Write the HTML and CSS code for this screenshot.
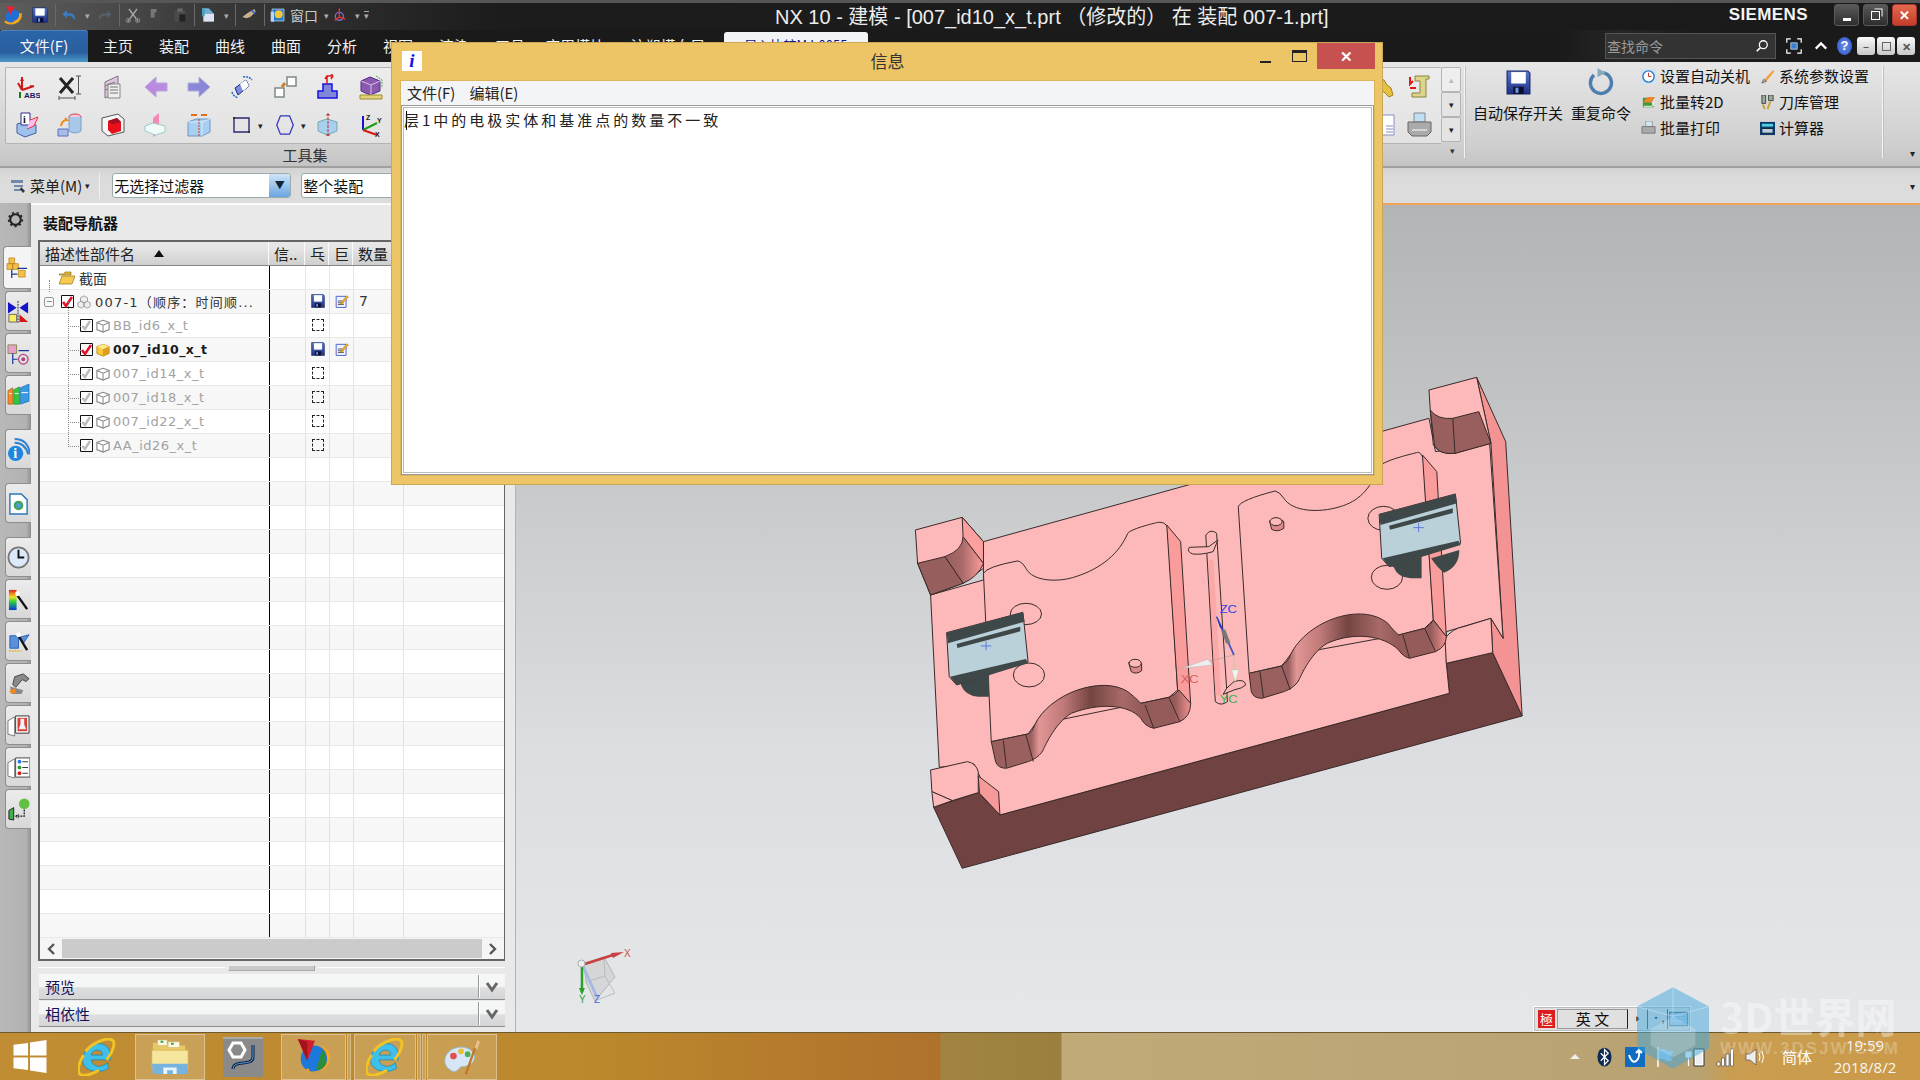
FILE: index.html
```html
<!DOCTYPE html>
<html lang="zh">
<head>
<meta charset="utf-8">
<title>NX 10 - 建模</title>
<link rel="stylesheet" href="styles.css">
</head>
<body>
<svg class="defs" width="0" height="0">
  <defs>
    <linearGradient id="gFloppy" x1="0" y1="0" x2="0" y2="1"><stop offset="0" stop-color="#5a78c8"/><stop offset="1" stop-color="#1c2f86"/></linearGradient>
    <linearGradient id="gWall" gradientUnits="userSpaceOnUse" x1="255" y1="0" x2="715" y2="0">
      <stop offset="0" stop-color="#9a605f"/><stop offset=".2" stop-color="#9a605f"/><stop offset=".24" stop-color="#e09694"/><stop offset=".36" stop-color="#c07a78"/><stop offset=".5" stop-color="#744543"/><stop offset=".66" stop-color="#a86a68"/><stop offset=".75" stop-color="#945b5a"/><stop offset=".92" stop-color="#945b5a"/><stop offset="1" stop-color="#f09090"/>
    </linearGradient>
    <linearGradient id="gWall2" gradientUnits="userSpaceOnUse" x1="850" y1="0" x2="1305" y2="0">
      <stop offset="0" stop-color="#9a605f"/><stop offset=".2" stop-color="#9a605f"/><stop offset=".24" stop-color="#e09694"/><stop offset=".36" stop-color="#c07a78"/><stop offset=".5" stop-color="#744543"/><stop offset=".66" stop-color="#a86a68"/><stop offset=".75" stop-color="#945b5a"/><stop offset=".92" stop-color="#945b5a"/><stop offset="1" stop-color="#f09090"/>
    </linearGradient>
    <linearGradient id="gCorner" x1="0" y1="0" x2="1" y2="0"><stop offset="0" stop-color="#965e5d"/><stop offset=".45" stop-color="#a86a68"/><stop offset="1" stop-color="#ff9d9d"/></linearGradient>
    <symbol id="floppy" viewBox="0 0 24 24"><path d="M1 1h20l2 2v20H1z" fill="url(#gFloppy)" stroke="#1a2466"/><path d="M5 2h14v11H5z" fill="#fff"/><path d="M7 16h10v7H7z" fill="#0b0f2c"/><path d="M9 17h3v5H9z" fill="#6f8fe0"/></symbol>
    <symbol id="note" viewBox="0 0 24 24"><path d="M2 4h17v19H2z" fill="#eef2ff" stroke="#3e56c8" stroke-width="1.5"/><path d="M5 12h8M5 15h10M5 18h10" stroke="#333" stroke-width="1.3"/><path d="M10 15 20 3l3 2-11 12-3 1z" fill="#f0b820" stroke="#a34b12" stroke-width=".7"/></symbol>
    <symbol id="cube" viewBox="0 0 16 16"><path d="M8 1.500 15 4v8l-7 3-7-3V4z" fill="#fff" stroke="#8a8a8a" stroke-width="1.300"/><path d="M1 4l7 3 7-3M8 7v8" fill="none" stroke="#8a8a8a" stroke-width="1.200"/></symbol>
    <symbol id="cubeY" viewBox="0 0 16 16"><path d="M8 1.500 15 4v8l-7 3-7-3V4z" fill="#f8c93c" stroke="#c28c16"/><path d="M1 4l7 3 7-3-7-2.500z" fill="#fce98a"/><path d="M8 7v8l7-3V4z" fill="#e09c1c"/></symbol>
    <symbol id="chkRed" viewBox="0 0 13 13"><path d="M.5.500h12v12H.500z" fill="#fff" stroke="#111"/><path d="M2 7l3 4 6-9" fill="none" stroke="#e3122a" stroke-width="2.600"/></symbol>
    <symbol id="chkGray" viewBox="0 0 13 13"><path d="M.5.500h12v12H.500z" fill="#fff" stroke="#111"/><path d="M2.500 7l2.500 3 5-8" fill="none" stroke="#bcbcbc" stroke-width="2.400"/></symbol>
    <symbol id="ie" viewBox="0 0 40 40"><path d="M5 24C5 11 15 5 24 6c7 1 11 7 10 17H14c1 8 11 9 17 3l1 6c-9 6-27 3-27-8zM14 18h12c0-7-11-7-12 0z" fill="#3fc0ea" stroke="#1785bd" stroke-width=".8"/><path d="M8 14C15 5 30 -1 36 2c4 3 1 12-6 21M6 18C0 27-1 35 2 38c4 3 13 0 20-4" fill="none" stroke="#f1c326" stroke-width="3"/></symbol>
    <g id="electrode">
      <path class="m0" d="M185 965 250 945V1010H225Q195 1008 185 975z" fill="#3f4849"/>
      <path class="m" d="M152 818 328 757 340 905 175 975 158 950z" fill="#bbd1d9"/>
      <path d="M152 818 328 757 332 785 155 850z" fill="#3f4849"/>
      <path d="M175 852 322 800V814L177 864z" fill="#3f4849"/>
      <path d="M160 950 335 897 340 910 175 975z" fill="#3f4849"/>
      <path class="mb" d="M243 844V871M231 858H255"/>
    </g>
  </defs>
</svg>
<div class="app">
  <header class="titlebar">
    <div class="qat">
      <svg class="q-logo" viewBox="0 0 24 24"><circle cx="12" cy="14" r="8" fill="#1f6fd6"/><path d="M13 20c5-1 8-5 7-10" stroke="#f2a51e" stroke-width="3" fill="none"/><path d="M5 2l9 1-5 9z" fill="#e32636"/><path d="M3 19c4 3 10 3 15-1" stroke="#f2a51e" stroke-width="2.500" fill="none"/></svg>
      <svg class="q-ic ml8" viewBox="0 0 24 24"><use href="#floppy"/></svg>
      <i class="q-sep ml7"></i>
      <svg class="q-ic ml5" viewBox="0 0 24 24"><path d="M21 20c1-8-4-12-12-10V5L2 11l7 6v-4c5-1 9 1 12 7z" fill="#3d7bc4"/></svg>
      <span class="q-drop ml6">▾</span>
      <svg class="q-ic ml6" viewBox="0 0 24 24"><path d="M3 20C2 12 7 8 15 10V5l7 6-7 6v-4c-5-1-9 1-12 7z" fill="#55606c"/></svg>
      <i class="q-sep ml6"></i>
      <svg class="q-ic ml5" viewBox="0 0 24 24"><path d="M4 22 18 3M20 22 6 3" stroke="#aaa" stroke-width="2"/><circle cx="5" cy="20" r="3" fill="none" stroke="#777" stroke-width="2"/><circle cx="19" cy="20" r="3" fill="none" stroke="#777" stroke-width="2"/></svg>
      <svg class="q-ic ml7" viewBox="0 0 24 24"><path d="M4 3h9v13H4z" fill="#777"/><path d="M10 8h10v14H10z" fill="#444"/></svg>
      <svg class="q-ic ml8" viewBox="0 0 24 24"><path d="M4 5h16v17H4z" fill="#4a4a4a"/><path d="M8 2h8v5H8z" fill="#666"/><path d="M11 11h9v11h-9z" fill="#222"/></svg>
      <i class="q-sep ml6"></i>
      <svg class="q-ic ml5" viewBox="0 0 24 24"><path d="M3 2h10l8 8H3z" fill="#6fb0d8"/><path d="M5 10h16v12H5z" fill="#dfe2f2"/><path d="M3 2h4v12H3z" fill="#4aa2b8"/></svg>
      <span class="q-drop ml6">▾</span>
      <i class="q-sep ml5"></i>
      <svg class="q-ic ml5" viewBox="0 0 24 24"><path d="M2 15l8-6 10-6 2 4-8 8-6 2z" fill="#c9b28a"/><path d="M16 5l5 5" stroke="#3c64c8" stroke-width="3"/></svg>
      <i class="q-sep ml7"></i>
      <svg class="q-ic ml5" viewBox="0 0 24 24"><path d="M3 3h18v18H3z" fill="#2a78c8" stroke="#cfe2ff"/><circle cx="13" cy="11" r="6" fill="#f3c73a"/><path d="M1 7h5v15H1z" fill="#b9d4f2"/></svg>
      <span class="q-text ml4">窗口</span>
      <span class="q-drop ml4">▾</span>
      <svg class="q-ic ml2" viewBox="0 0 24 24"><circle cx="11" cy="14" r="6" fill="none" stroke="#7c6bd0" stroke-width="2"/><path d="M11 2v14M4 20l7-5 9 3" stroke="#d33" stroke-width="2" fill="none"/></svg>
      <span class="q-drop ml5">▾</span>
      <span class="q-more ml3">▾</span>
    </div>
    <h1 class="title">NX 10 - 建模 - [007_id10_x_t.prt （修改的） 在 装配 007-1.prt]</h1>
    <span class="siemens">SIEMENS</span>
    <div class="winbtns">
      <button class="wb"><i class="w-min"></i></button>
      <button class="wb"><i class="w-res"></i></button>
      <button class="wb wb-close">✕</button>
    </div>
  </header>

  <nav class="tabs">
    <span class="tab tab-file">文件(F)</span>
    <span class="tab">主页</span><span class="tab">装配</span><span class="tab">曲线</span><span class="tab">曲面</span><span class="tab">分析</span><span class="tab">视图</span><span class="tab">渲染</span><span class="tab">工具</span>
    <span class="tab tab-w">应用模块</span><span class="tab tab-w2">注塑模向导</span>
    <span class="tab-light">导入比较MJ-0055</span>
    <div class="search"><span>查找命令</span>
      <svg class="s-ic" viewBox="0 0 16 16"><circle cx="9.500" cy="6.500" r="4.500" fill="none" stroke="#fff" stroke-width="1.500"/><path d="M6 10l-4 4" stroke="#fff" stroke-width="2"/></svg>
    </div>
    <svg class="t-ic t-fit" viewBox="0 0 20 20"><path d="M1 6V1h5M14 1h5v5M19 14v5h-5M6 19H1v-5" fill="none" stroke="#fff" stroke-width="1.500"/><path d="M6 6h8v8H6z" fill="#3a7fd0" stroke="#cde"/></svg>
    <svg class="t-ic t-up" viewBox="0 0 16 16"><path d="M2 11l6-6 6 6" fill="none" stroke="#fff" stroke-width="2.500"/></svg>
    <span class="t-help">?</span>
    <span class="sb">–</span><span class="sb sb-r"><i></i></span><span class="sb">✕</span>
  </nav>

  <section class="ribbon">
    <div class="toolgroup">
      <div class="toolbox">
        <div class="toolgrid">
          <svg class="ti" viewBox="0 0 26 26"><path d="M8 16V3M8 16l12-4M8 16l-4-7" stroke="#d01818" stroke-width="2" fill="none"/><path d="M8 3l-2 4h4zM20 12l-4-1v3z" fill="#d01818"/><path d="M6 18v6" stroke="#1b7a1b" stroke-width="2"/><text x="10" y="24" class="svg-t">ABS</text></svg>
          <svg class="ti" viewBox="0 0 26 26"><path d="M3 4l13 15M16 4 3 19" stroke="#222" stroke-width="3"/><path d="M19 2h5M21.500 2v18M19 20h5M2 24h16M2 22v4M18 22v4" stroke="#555"/></svg>
          <svg class="ti" viewBox="0 0 26 26"><path d="M5 8 18 2v17L5 24z" fill="#d8c8d8" stroke="#8a6a8a"/><path d="M8 10h12v14H8z" fill="#eee" stroke="#888"/><path d="M10 13h8M10 16h8M10 19h8M5 12l10-4M5 16l3-1" stroke="#777"/></svg>
          <svg class="ti" viewBox="0 0 26 26"><path d="M2 13 13 3v6h11v8H13v6z" fill="#b88ae0" stroke="#b9a5d8"/></svg>
          <svg class="ti" viewBox="0 0 26 26"><path d="M24 13 13 3v6H2v8h11v6z" fill="#8a86d8" stroke="#b0aee0"/></svg>
          <svg class="ti" viewBox="0 0 26 26"><path d="M6 14 17 6l3 6-11 9z" fill="#7a8ce0" stroke="#1b2a80"/><path d="M11 10l6-4 3 6-6 5z" fill="#fff"/><path d="M14 3q6-1 9 3M3 18q1 4 6 6" fill="none" stroke="#2a6ad0" stroke-width="1.500" stroke-dasharray="2 1"/></svg>
          <svg class="ti" viewBox="0 0 26 26"><path d="M15 3h9v9h-9zM3 14h9v9H3z" fill="#fff" stroke="#7f8a80" stroke-width="1.500"/><path d="M13 9l-3 4" stroke="#d08030" stroke-width="3"/></svg>
          <svg class="ti" viewBox="0 0 26 26"><path d="M8 10h9v7h5v7H3v-7h5z" fill="#8086d8" stroke="#1414e0" stroke-width="1.500"/><path d="M12 10V2h6M12 2l-2 3M18 2l-2-2M18 2l-2 3" fill="none" stroke="#e01818" stroke-width="1.500"/></svg>
          <svg class="ti" viewBox="0 0 26 26"><path d="M3 7l9-4 10 4v10l-10 4-9-4z" fill="#8a5ab0" stroke="#552a80"/><path d="M3 7l10 4 9-4M13 11v10" fill="none" stroke="#d8c0e8"/><path d="M2 21h22v4H2z" fill="#e4d27a" stroke="#9c8a30"/><path d="M18 2l6 4v7" stroke="#4a4" fill="none" stroke-dasharray="2 1"/></svg>

          <svg class="ti" viewBox="0 0 26 26"><path d="M3 12l11-3 8 4v8l-11 4-8-4z" fill="#9fc0ea" stroke="#4060a8"/><path d="M7 1h9v12H7z" fill="#fff" stroke="#2a2a8a"/><text x="9" y="11" class="svg-i">i</text><path d="M16 8l8-3-4 9-7 3" fill="#fbe" stroke="#e03a3a"/></svg>
          <svg class="ti" viewBox="0 0 26 26"><ellipse cx="18" cy="5" rx="6" ry="3" fill="#f4c8d8" stroke="#d83a5a"/><path d="M12 5v14q6 4 12 0V5" fill="#a8c8ea" stroke="#7aa0c8"/><path d="M1 17h10v7H1z" fill="#a8bcea" stroke="#5a70c0"/><path d="M4 14q1-6 6-6l-2-2" fill="none" stroke="#f08a20" stroke-width="2"/></svg>
          <svg class="ti" viewBox="0 0 26 26"><path d="M2 6l16-4 6 5v13l-16 4-6-5z" fill="#f6f6f6" stroke="#555"/><path d="M8 9l9-3 4 4v9l-9 3-4-4z" fill="#e8101c"/><path d="M8 9l9-3 4 4-9 2z" fill="#a01020"/></svg>
          <svg class="ti" viewBox="0 0 26 26"><path d="M10 6l6-5v20l-6 4z" fill="#f48ab4"/><path d="M2 14l8-3 12 3v6l-10 3-10-4z" fill="#f0fbf8" stroke="#9cc"/></svg>
          <svg class="ti" viewBox="0 0 26 26"><path d="M2 10l8-3h14v13l-8 4H2z" fill="#a8cef0" stroke="#6a98c8"/><path d="M2 10h14v14M16 10l8-3" fill="none" stroke="#d6ebff"/><path d="M13 7v17" stroke="#d04020" stroke-dasharray="2 1"/><path d="M5 3h6M15 3h6" stroke="#e07020" stroke-width="2"/></svg>
          <div class="ti-drop"><svg class="ti-sm" viewBox="0 0 20 20"><path d="M2 3h15v14H2z" fill="none" stroke="#2a2a70" stroke-width="1.400"/><path d="M1 2h2v2H1zM16 16h2v2h-2z" fill="#333"/></svg><span class="dr">▾</span></div>
          <div class="ti-drop"><svg class="ti-sm" viewBox="0 0 20 24"><path d="M5 2h10l4 10-4 10H5L1 12z" fill="none" stroke="#3636c0" stroke-width="1.400"/></svg><span class="dr">▾</span></div>
          <svg class="ti" viewBox="0 0 26 26"><path d="M3 10l9-3 10 3v9l-10 4-9-4z" fill="#a8cef0" stroke="#7aa"/><path d="M13 1v24" stroke="#b03030" stroke-dasharray="3 1"/><path d="M11 3h4M11 23h4" stroke="#b03030"/></svg>
          <svg class="ti" viewBox="0 0 26 26"><path d="M5 18V4" stroke="#1414c8" stroke-width="2"/><path d="M5 18l14-7" stroke="#16a016" stroke-width="2"/><path d="M5 18l14 5" stroke="#d81818" stroke-width="2"/><text x="8" y="8" class="svg-a">Z</text><text x="19" y="11" class="svg-a">Y</text><text x="17" y="25" class="svg-a">X</text></svg>
        </div>
        <div class="toolgrid-r">
          <svg class="ti ti-clip" viewBox="0 0 26 26"><path d="M10 4l5 2 3 5 4 3 2 7-4 2-5-5-6-3z" fill="#e8c040" stroke="#a08020"/></svg>
          <svg class="ti" viewBox="0 0 26 26"><path d="M8 2h14v3h-3v18H5v-4h8V7H8z" fill="#ddd58a" stroke="#8a8440"/><path d="M3 3v7l3-3M3 14h6" stroke="#e01818" stroke-width="2" fill="none"/></svg>
          <svg class="ti ti-clip" viewBox="0 0 26 26"><path d="M8 3h17v20H8z" fill="#fff" stroke="#8a8ac8"/><path d="M17 14h7M17 17h7M17 20h7" stroke="#8a8ac8"/></svg>
          <svg class="ti" viewBox="0 0 26 26"><path d="M7 1h11v9H7z" fill="#bde0f5" stroke="#888"/><path d="M1 10h23v10l-4 4H5l-4-4z" fill="#aaa" stroke="#666"/><path d="M5 18h15" stroke="#fff"/></svg>
        </div>
      </div>
      <div class="group-label">工具集</div>
    </div>
    <div class="scrollcol"><span class="sc">▴</span><span class="sc sc-d">▾</span><span class="sc sc-d">▾</span><span class="sc-corner">▾</span></div>
    <div class="rib-div"></div>
    <div class="bigbtn b1">
      <svg class="big-ic" viewBox="0 0 24 24"><use href="#floppy"/></svg>
      <span>自动保存开关</span>
    </div>
    <div class="bigbtn b2">
      <svg class="big-ic big-r" viewBox="0 0 24 24"><path d="M6 6a9 9 0 1 0 8-2" fill="none" stroke="#4d7fae" stroke-width="3"/><path d="M9 0l7 4-7 4z" fill="#8ab"/></svg>
      <span>重复命令</span>
    </div>
    <ul class="cmdlist">
      <li><svg class="ci" viewBox="0 0 16 16"><path d="M0 0h16v16H0z" fill="#cfe4f4"/><circle cx="8" cy="8" r="6" fill="#fff" stroke="#2f78c0" stroke-width="1.500"/><path d="M8 4v4h3" stroke="#c03020" fill="none"/></svg>设置自动关机</li>
      <li><svg class="ci" viewBox="0 0 16 16"><path d="M2 3h12l-3 5 3 5H2z" fill="#3e9a3a"/><path d="M2 8l5-6h8l-4 6z" fill="#f0852a"/><path d="M3 12h9l2-4" stroke="#fff" fill="none"/></svg>批量转2D</li>
      <li><svg class="ci" viewBox="0 0 16 16"><path d="M5 0h7v6H5z" fill="#cfe8f5" stroke="#999"/><path d="M1 6h14v7H1z" fill="#aaa" stroke="#777"/></svg>批量打印</li>
    </ul>
    <ul class="cmdlist c2">
      <li><svg class="ci" viewBox="0 0 16 16"><path d="M2 15l2-4 3 2z" fill="#bbb" stroke="#666"/><path d="M5 11l9-10 1 2-8 10z" fill="#f0a030"/></svg>系统参数设置</li>
      <li><svg class="ci" viewBox="0 0 16 16"><path d="M2 0h4v9H2zM9 0h5v6H9z" fill="#9a9" stroke="#444"/><path d="M3 10l2 5M11 7l-3 8" stroke="#c8a030" stroke-width="2"/></svg>刀库管理</li>
      <li><svg class="ci" viewBox="0 0 16 16"><path d="M0 1h16v14H0z" fill="#0c3a6a"/><path d="M2 3h12v3H2z" fill="#4fd0e0"/><path d="M2 8h12v5H2z" fill="#bcd" stroke="#123"/></svg>计算器</li>
    </ul>
    <div class="rib-div d2"></div>
    <span class="rib-arrow">▾</span>
  </section>

  <div class="selbar">
    <svg class="m-ic" viewBox="0 0 16 16"><path d="M1 2h12v3H1zM4 7h9v2H4zM4 11h9v2H4z" fill="#6f8aa8"/><path d="M11 9l4 4-2 2-3-4z" fill="#333"/></svg>
    <span class="m-txt">菜单(M)</span><span class="m-dr">▾</span>
    <i class="m-sep"></i>
    <div class="field f1"><span>无选择过滤器</span><b class="f-btn">▼</b></div>
    <div class="field f2"><span>整个装配</span></div>
    <span class="sel-arrow">▾</span>
  </div>

  <main class="main">
    <aside class="rail">
      <svg class="gear" viewBox="0 0 16 16"><circle cx="8" cy="8" r="5" fill="none" stroke="#222" stroke-width="2"/><circle cx="8" cy="8" r="6.500" fill="none" stroke="#222" stroke-width="1.500" stroke-dasharray="2 2.500"/></svg>
      <div class="rtab active"><svg viewBox="0 0 24 24"><path d="M3 2h6v6H3zM7 8h6v6H7zM1 8h6v6H1z" fill="#f2bf4a" stroke="#b87f14" stroke-width=".7"/><path d="M6 14v9M6 19h6M12 13h10" stroke="#173a9a" stroke-width="1.300" fill="none"/><path d="M13 15h7v7h-7z" fill="#f2bf4a" stroke="#b87f14" stroke-width=".7"/></svg></div>
      <div class="rtab"><svg viewBox="0 0 24 24"><path d="M1 2l9 6-9 6zM22 2l-9 6 9 6z" fill="#1414c8"/><path d="M11.500 1v23" stroke="#222" stroke-dasharray="2 1"/><path d="M2 15h8v8H2z" fill="#f8ee60" stroke="#666"/><path d="M13 15l9 8h-9z" fill="#d81414"/></svg></div>
      <div class="rtab"><svg viewBox="0 0 24 24"><path d="M1 3h9v9H1z" fill="#e8a0c8" stroke="#885"/><path d="M6 12v11M6 18h5M12 9h11" stroke="#173a9a" stroke-width="1.300"/><circle cx="17" cy="18" r="5" fill="none" stroke="#b04080" stroke-width="1.300"/><circle cx="17" cy="18" r="2" fill="#b04080"/></svg></div>
      <div class="rtab"><svg viewBox="0 0 24 24"><path d="M1 7l5-3v17H1z" fill="#f08a2a" stroke="#a85a10" stroke-width=".7"/><path d="M7 6l6-3v18H7z" fill="#34c440" stroke="#1a8a20" stroke-width=".7"/><path d="M14 4l9-4v18l-9 3z" fill="#3a9ae0" stroke="#1a6ab0" stroke-width=".7"/><path d="M2 10h3M8 10h4M15 9h7" stroke="#fff"/></svg></div>
      <div class="rtab gap1"><svg viewBox="0 0 24 24"><circle cx="9" cy="16" r="8" fill="#1f86e0"/><text x="6.500" y="21" class="svg-wi">i</text><path d="M8 5q11 0 14 12M8 1q14 0 16 16" fill="none" stroke="#2f80d0" stroke-width="2"/></svg></div>
      <div class="rtab gap2"><svg viewBox="0 0 24 24"><path d="M3 2h12l6 6v15H3z" fill="#fff" stroke="#2a78b8" stroke-width="1.500"/><circle cx="12" cy="14" r="5" fill="#3da55a"/><circle cx="12" cy="14" r="2.500" fill="#5a9ae0"/></svg></div>
      <div class="rtab gap3"><svg viewBox="0 0 24 24"><circle cx="12" cy="12" r="10.500" fill="#dbe9f8" stroke="#777" stroke-width="1.800"/><path d="M12 4v8h6" fill="none" stroke="#111" stroke-width="2"/></svg></div>
      <div class="rtab"><svg viewBox="0 0 24 24"><defs><linearGradient id="gRain" x1="0" y1="0" x2="0" y2="1"><stop offset="0" stop-color="#e02020"/><stop offset=".35" stop-color="#f0e020"/><stop offset=".6" stop-color="#20d040"/><stop offset="1" stop-color="#1030e0"/></linearGradient></defs><path d="M2 2h8v21H2z" fill="url(#gRain)"/><path d="M11 8l10 14" stroke="#111" stroke-width="2.500"/><circle cx="11" cy="6" r="2.500" fill="#fff"/></svg></div>
      <div class="rtab"><svg viewBox="0 0 24 24"><path d="M3 6h9v13H3zM12 8l11-3-6 9" fill="#5a90d8" stroke="#2a60b8"/><path d="M2 22h13" stroke="#dcb83a" stroke-width="1.500" stroke-dasharray="2 1"/><path d="M12 6l9 15" stroke="#111" stroke-width="2.500"/><circle cx="12" cy="5" r="2.500" fill="#fff"/></svg></div>
      <div class="rtab"><svg viewBox="0 0 24 24"><path d="M8 5l9-3 6 5-3 3-4-2-7 8-3-3z" fill="#8a8a8a" stroke="#444"/><path d="M3 15l14 4-2 4H5z" fill="#888"/><path d="M2 20l6-3 2 4-5 2z" fill="#f08a20"/></svg></div>
      <div class="rtab"><svg viewBox="0 0 24 24"><path d="M9 2h14v18H9z" fill="#fff" stroke="#333"/><path d="M11 4h10v14H11z" fill="#d84030"/><path d="M14 5h4v6l2 5h-8l2-5z" fill="#f0f0ff"/><path d="M1 7l7-4v20l-7 -2z" fill="#fff" stroke="#777"/></svg></div>
      <div class="rtab"><svg viewBox="0 0 24 24"><path d="M9 2h15v20H9z" fill="#fff" stroke="#444"/><circle cx="13" cy="6" r="2" fill="#2a7ae0"/><circle cx="13" cy="12" r="2" fill="#30a030"/><circle cx="13" cy="18" r="2" fill="#d02020"/><path d="M16 6h6M16 12h6M16 18h6" stroke="#333"/><path d="M1 7l7-4v20l-7-2z" fill="#fff" stroke="#777"/></svg></div>
      <div class="rtab"><svg viewBox="0 0 24 24"><circle cx="18" cy="6" r="5.500" fill="#60c040"/><path d="M2 13l5-3v13l-5-1z" fill="#3fb04a" stroke="#222"/><path d="M18 12v7H9M9 19l3-2M9 19l3 2" fill="none" stroke="#111" stroke-width="1.300" stroke-dasharray="2 1"/></svg></div>
    </aside>

    <section class="nav">
      <h2 class="nav-title">装配导航器</h2>
      <div class="tbl">
        <div class="thead">
          <span class="th th-name">描述性部件名<i class="sort"></i></span>
          <span class="th th-a">信..</span><span class="th th-b">乓</span><span class="th th-b">巨</span><span class="th th-c">数量</span><span class="th th-d"></span>
        </div>
        <div class="tbody">
          <div class="row">
            <svg class="folder" viewBox="0 0 16 14"><path d="M0 3h5l1-2h6v3H0z" fill="#dfb63a" stroke="#9a7514" stroke-width=".7"/><path d="M0 13l3-8h13l-3 8z" fill="#f6c950" stroke="#9a7514" stroke-width=".7"/></svg>
            <span class="cell-text t-dark t-cjk">截面</span>
          </div>
          <div class="row root">
            <span class="exp"></span>
            <svg class="chk" viewBox="0 0 13 13"><use href="#chkRed"/></svg>
            <svg class="cube-ic" viewBox="0 0 16 16"><path d="M1 9l4-2 3 2v4l-3 2-4-2zM8 9l4-2 3 2v4l-3 2-4-2zM4 3l4-2 4 2v4l-4 2-4-2z" fill="#eee" stroke="#999"/></svg>
            <span class="cell-text t-dark nm">007-1（顺序：时间顺...</span>
            <svg class="st st-a" viewBox="0 0 24 24"><use href="#floppy"/></svg>
            <svg class="st st-b" viewBox="0 0 24 24"><use href="#note"/></svg>
            <span class="qty">7</span>
          </div>
          <div class="row child"><svg class="chk" viewBox="0 0 13 13"><use href="#chkGray"/></svg><svg class="cube-ic" viewBox="0 0 16 16"><use href="#cube"/></svg><span class="cell-text t-gray">BB_id6_x_t</span><i class="dash"></i></div>
          <div class="row child"><svg class="chk" viewBox="0 0 13 13"><use href="#chkRed"/></svg><svg class="cube-ic" viewBox="0 0 16 16"><use href="#cubeY"/></svg><span class="cell-text t-bold">007_id10_x_t</span><svg class="st st-a" viewBox="0 0 24 24"><use href="#floppy"/></svg><svg class="st st-b" viewBox="0 0 24 24"><use href="#note"/></svg></div>
          <div class="row child"><svg class="chk" viewBox="0 0 13 13"><use href="#chkGray"/></svg><svg class="cube-ic" viewBox="0 0 16 16"><use href="#cube"/></svg><span class="cell-text t-gray">007_id14_x_t</span><i class="dash"></i></div>
          <div class="row child"><svg class="chk" viewBox="0 0 13 13"><use href="#chkGray"/></svg><svg class="cube-ic" viewBox="0 0 16 16"><use href="#cube"/></svg><span class="cell-text t-gray">007_id18_x_t</span><i class="dash"></i></div>
          <div class="row child"><svg class="chk" viewBox="0 0 13 13"><use href="#chkGray"/></svg><svg class="cube-ic" viewBox="0 0 16 16"><use href="#cube"/></svg><span class="cell-text t-gray">007_id22_x_t</span><i class="dash"></i></div>
          <div class="row child last"><svg class="chk" viewBox="0 0 13 13"><use href="#chkGray"/></svg><svg class="cube-ic" viewBox="0 0 16 16"><use href="#cube"/></svg><span class="cell-text t-gray">AA_id26_x_t</span><i class="dash"></i></div>
          <div class="row"></div><div class="row"></div><div class="row"></div><div class="row"></div><div class="row"></div>
          <div class="row"></div><div class="row"></div><div class="row"></div><div class="row"></div><div class="row"></div>
          <div class="row"></div><div class="row"></div><div class="row"></div><div class="row"></div><div class="row"></div>
          <div class="row"></div><div class="row"></div><div class="row"></div><div class="row"></div><div class="row"></div>
        </div>
        <div class="hscroll">
          <svg class="chev" viewBox="0 0 10 14"><path d="M8 2 3 7l5 5" fill="none" stroke="#555" stroke-width="2.400"/></svg>
          <span class="thumb"></span>
          <svg class="chev" viewBox="0 0 10 14"><path d="M2 2l5 5-5 5" fill="none" stroke="#555" stroke-width="2.400"/></svg>
        </div>
      </div>
      <div class="splitter"><i></i><b></b><i></i></div>
      <div class="acc"><span class="acc-t">预览</span><svg class="acc-c" viewBox="0 0 14 12"><path d="M2 2l5 7 5-7" fill="none" stroke="#666" stroke-width="3"/></svg></div>
      <div class="acc a2"><span class="acc-t">相依性</span><svg class="acc-c" viewBox="0 0 14 12"><path d="M2 2l5 7 5-7" fill="none" stroke="#666" stroke-width="3"/></svg></div>
    </section>

    <div class="viewport">
      <svg class="scene" viewBox="515 205 1405 827" preserveAspectRatio="none">
        <g transform="translate(880 360) scale(.4337 .3333)">
          <path class="m" d="M122 1342 225 1298 275 1365 1312 1000 1305 910 1412 878 1480 1068 188 1525z" fill="#704241"/>
          <path class="m" d="M1375 52 1442 245 1480 1068 1412 878 1408 775 1436 835 1408 250z" fill="#f49393"/>
          <path class="m" d="M237 545 1265 175 1280 275 1405 250 1436 835 1408 775 1305 815 1305 910 1312 1000 275 1365 225 1240 215 1212 135 1222 115 705 237 660z" fill="#fdb9b9"/>
          <path class="m" d="M1302 835Q1320 805 1345 800L1408 775 1412 878 1305 910z" fill="#fdb9b9"/>
          <path class="m" d="M1265 90 1375 52 1408 250 1325 280Q1290 285 1275 255L1268 150z" fill="#fdb9b9"/>
          <path class="m" d="M1268 150Q1285 180 1320 175L1380 155 1408 250 1325 280Q1290 285 1278 258z" fill="#985f5e"/>
          <path class="m0 ln" d="M1320 175 1325 280"/>
          <path class="m" d="M80 510 188 472 237 545 237 625 190 670 115 705 85 610z" fill="#fdb9b9"/>
          <path class="m" d="M148 590Q190 570 190 530L237 610Q225 650 190 670z" fill="url(#gCorner)"/>
          <path class="m" d="M85 610 148 590 190 670 115 705z" fill="#965e5d"/>
          <path class="m" d="M188 472 237 545V610L190 530z" fill="#fb9f9f"/>
          <path class="m" d="M115 1230 200 1205Q220 1210 225 1235L225 1298 165 1322 118 1295z" fill="#fdb9b9"/>
          <path class="m" d="M225 1248 272 1295 275 1365 228 1300z" fill="#f59999"/>
          <path class="m" d="M118 1295 165 1322 122 1342z" fill="#fdb9b9"/>

          <path class="m" d="M237 640Q245 620 315 603 325 603 335 625C350 665 410 668 450 650 510 625 550 580 570 520 578 505 640 487 640 487 660 485 662 505 662 505L685 990 665 1012 600 1030 355 1095 340 1122 255 1145z" fill="#fdb9b9"/>
          <path class="m" d="M660 495 692 545 715 1030 685 990z" fill="#fb9c9c"/>
          <path class="m" d="M255 1145 340 1122Q350 1115 355 1095C390 1000 510 945 570 995 590 1015 600 1030 600 1030L665 1012Q680 1005 688 990L715 1030Q715 1070 690 1085L630 1105Q610 1100 600 1075C570 1030 500 1030 440 1060 400 1090 375 1170 375 1170 365 1195 340 1205 340 1205L290 1225Q270 1225 265 1205z" fill="url(#gWall)"/>
          <path class="m0 ln" d="M283 1142 290 1222M335 1125 352 1205M610 1035 630 1105M665 1012 690 1085"/>

          <path class="m" d="M825 440Q830 420 910 393 920 395 930 415C950 455 1010 460 1060 440 1100 425 1130 390 1150 320 1160 300 1240 277 1240 277 1250 280 1252 300 1252 300L1275 780 1255 805 1195 825 945 885 925 918 850 940z" fill="#fdb9b9"/>
          <path class="m" d="M1250 285 1283 335 1305 830 1275 780z" fill="#fb9c9c"/>
          <path class="m" d="M850 940 925 918Q940 905 945 885C985 780 1110 725 1170 790 1185 815 1195 825 1195 825L1255 805Q1270 795 1275 780L1305 830Q1305 860 1280 875L1220 895Q1205 890 1195 870C1160 825 1090 815 1030 850 990 880 965 960 965 960 955 985 930 995 930 995L880 1015Q860 1015 855 995z" fill="url(#gWall2)"/>
          <path class="m0 ln" d="M875 935 883 1012M925 918 945 990M1205 825 1220 895M1255 805 1280 875"/>

          <path class="m" d="M750 525Q762 505 775 520L800 1025Q785 1040 772 1025z" fill="#fdb9b9"/>
          <path class="m" d="M757 560 778 540 767 575Q740 585 720 582 705 575 712 562z" fill="#fdb9b9"/>
          <path class="m" d="M798 985 815 965Q840 955 842 975 835 985 815 990L790 1003z" fill="#fdb9b9"/>
          <path d="M756 600 772 1005 785 1005 768 600z" fill="#fb9c9c" opacity=".6"/>

          <ellipse class="m" cx="335" cy="762" rx="36" ry="32" fill="#fdb9b9"/>
          <ellipse class="m" cx="342" cy="945" rx="36" ry="36" fill="#fdb9b9"/>
          <ellipse class="m" cx="1160" cy="475" rx="36" ry="36" fill="#fdb9b9"/>
          <ellipse class="m" cx="1168" cy="652" rx="36" ry="36" fill="#fdb9b9"/>
          <path class="m" d="M572 908Q590 890 602 910V932Q590 945 578 935z" fill="#d98a88"/>
          <ellipse class="m" cx="587" cy="910" rx="14" ry="12" fill="#fdb9b9"/>
          <path class="m" d="M897 483Q915 465 930 485V505Q915 518 902 508z" fill="#d98a88"/>
          <ellipse class="m" cx="912" cy="485" rx="14" ry="12" fill="#fdb9b9"/>

          <use href="#electrode"/>
          <g transform="translate(998 -355)">
            <use href="#electrode"/>
          </g>
          <path d="M1270 595 1335 570Q1335 620 1300 638 1285 625 1270 595z" fill="#3f4849"/>

          <path d="M775 770 815 885" stroke="#3b4fc4" stroke-width="4" class="ax"/>
          <path d="M775 770 790 810 800 830 782 800z" fill="#2030c0"/>
          <path d="M790 810 802 850" stroke="#777" stroke-width="10" class="ax"/>
          <path d="M815 885 695 925" stroke="#888" class="ax"/>
          <path d="M695 925 755 898 765 915z" fill="#eee" stroke="#aaa"/>
          <path d="M815 885 818 985" stroke="#8ec88e" class="ax"/>
          <path d="M810 930H826L818 965z" fill="#f4f4f4" stroke="#9c9"/>
          <text x="782" y="760" class="w-t wz">ZC</text>
          <text x="692" y="968" class="w-t wx">XC</text>
          <text x="782" y="1030" class="w-t wy">YC</text>
        </g>

        <g class="triad">
          <path d="M583 963 603 957 614 977 594 1001 585 982z" fill="#cfd0d2" fill-opacity=".7" stroke="#b4b5b7"/>
          <path d="M585 982 604 976 614 993 596 1000M603 957 604 976" fill="none" stroke="#bbb"/>
          <path d="M581 964 596 997" stroke="#a8b8e4" stroke-width="3"/>
          <path d="M584 964 612 955" stroke="#c84040" stroke-width="2.500"/>
          <path d="M610 953 623 952 612 958z" fill="#c84040"/>
          <path d="M581 965V992" stroke="#2ba02b" stroke-width="2.500"/>
          <path d="M578 988H584L581 995z" fill="#2ba02b"/>
          <circle cx="580.500" cy="963.500" r="3.500" fill="#eee" stroke="#aaa"/>
          <text x="623" y="957" class="tri tx">X</text>
          <text x="578" y="1003" class="tri ty">Y</text>
          <text x="593" y="1003" class="tri tz">Z</text>
        </g>
      </svg>
    </div>
  </main>

  <footer class="taskbar">
    <svg class="t-win" viewBox="0 0 34 34"><path d="M0 5 15 3v13H0zM17 2.700 34 0v16H17zM0 18h15v13L0 29zM17 18h17v16l-17-2.700z" fill="#fff"/></svg>
    <svg class="t-app t-ie1" viewBox="0 0 40 40"><use href="#ie"/></svg>
    <div class="tbtn t-exp"><svg viewBox="0 0 40 40"><path d="M2 5h14l3 3h17v10H2z" fill="#e8c866"/><path d="M7 2h10v6H7zM18 4h12v6H18z" fill="#fdf8e0" stroke="#cdb66a" stroke-width=".6"/><path d="M10 3h3v2h-3zM21 5h3v2h-3z" fill="#3aa05a"/><path d="M1 13h38v19H1z" fill="#f6e59c" stroke="#d6b95a" stroke-width=".7"/><path d="M1 27h38l-1 11H2z" fill="#74b4de"/><path d="M13 31h14v7h-4v-4h-6v4h-4z" fill="#e8f3fb"/></svg></div>
    <svg class="t-app t-tool" viewBox="0 0 40 40"><path d="M0 0h40v40H0z" fill="#8a8a8a"/><path d="M0 0h40v2H0z" fill="#aaa"/><path d="M10 6l8 0 4 7-4 7h-8l-4-7z" fill="none" stroke="#fff" stroke-width="3"/><path d="M30 8v12c0 10-20 2-20 12" fill="none" stroke="#0a2040" stroke-width="3"/><path d="M30 8v12c0 10-20 2-20 12" fill="none" stroke="#5aa0e0" stroke-width="1"/></svg>
    <div class="tbtn t-nx"><svg viewBox="0 0 40 40"><circle cx="20" cy="22" r="14" fill="#1d78dc"/><path d="M28 12c5 4 6 12 3 18-3 3-6 4-9 3 1-5 4-8 6-21z" fill="#2b8e3c"/><path d="M28 8c8 3 11 11 8 18-3 8-12 11-21 10l-4-3 4-1v3c8 1 15-2 18-8 2-6 0-13-5-19z" fill="#f5a623"/><path d="M3 1 21 3 13 24z" fill="#d31f2c"/><path d="M3 1 13 4l0 20z" fill="#a5121c"/></svg></div><i class="sliver s1"></i>
    <div class="tbtn t-ie2"><svg viewBox="0 0 40 40"><use href="#ie"/></svg></div><i class="sliver s2"></i><i class="sliver s3"></i>
    <div class="tbtn t-paint"><svg viewBox="0 0 40 40"><path d="M2 24C2 12 18 6 28 12c8 5 6 14-2 17-5 2-7 0-9 3-3 4-7 4-10 1-3-2-5-5-5-9z" fill="#d6e6f4" stroke="#9fc0d8"/><circle cx="11" cy="19" r="3.500" fill="#e05050"/><circle cx="19" cy="14" r="3" fill="#e8c030"/><circle cx="26" cy="17" r="3" fill="#50b050"/><path d="M24 38 36 4" stroke="#c0782a" stroke-width="2.500"/><path d="M33 10l3-8 3 2-3 8z" fill="#e8c08a"/></svg></div>
    <div class="tray">
      <span class="tr-up"></span>
      <svg class="tr-bt" viewBox="0 0 16 20"><ellipse cx="8" cy="10" rx="7.500" ry="10" fill="#0e2a52"/><path d="M4 6l8 8-4 4V2l4 4-8 8" fill="none" stroke="#fff" stroke-width="1.300"/></svg>
      <svg class="tr-ic" viewBox="0 0 20 20"><path d="M0 0h20v20H0z" fill="#0f6cc0"/><path d="M4 8q3 9 7 6t3-10M11 6l3-3 3 3" fill="none" stroke="#fff" stroke-width="2"/></svg>
      <svg class="tr-ic" viewBox="0 0 20 20"><path d="M3 0v20" stroke="#fff" stroke-width="1.500"/><path d="M4 2h6l2 2h7l-3 5 1 5h-6l-2-2H4z" fill="#a8d0ee"/></svg>
      <svg class="tr-ic" viewBox="0 0 20 20"><path d="M1 5h5v5H1zM3.500 10v9" fill="#fff" stroke="#fff" stroke-width="1.200"/><path d="M9 2h10v17H9z" fill="#fff" stroke="#333"/><path d="M11 4h6v13h-6z" fill="#eee"/></svg>
      <svg class="tr-ic" viewBox="0 0 20 20"><path d="M2 15h3v4H2zM6.500 11h3v8h-3zM11 7h3v12h-3zM15.500 2h3v17h-3z" fill="#fff" stroke="#444" stroke-width=".6"/></svg>
      <svg class="tr-ic" viewBox="0 0 20 20"><path d="M1 7h4l6-5v16l-6-5H1z" fill="#eee" stroke="#555" stroke-width=".7"/><path d="M14 6q2 4 0 8M17 4q3 6 0 12" fill="none" stroke="#fff"/></svg>
      <span class="tr-lang">简体</span>
      <div class="clock"><span>19:59</span><span>2018/8/2</span></div>
    </div>
  </footer>

  <div class="imebar">
    <span class="ime-seal">極</span><span class="ime-main">英 文</span><span class="ime-k">◗</span><span class="ime-k">·,</span>
    <svg class="ime-kb" viewBox="0 0 20 16"><path d="M0 1h20v14H0z" fill="#9fc4e4" stroke="#456"/><path d="M2 4h16M2 7h16M2 10h16" stroke="#eef" stroke-dasharray="2 1"/></svg>
  </div>

  <div class="watermark">
    <svg class="wm-logo" viewBox="0 0 74 84"><path d="M37 0 74 20V63L37 84 0 63V20z" fill="#3fa6dc" fill-opacity=".5"/><path d="M37 30 60 43V60L37 72 14 60V43z" fill="#fff" fill-opacity=".2"/><path d="M37 0V30M0 20 37 30 74 20" stroke="#fff" stroke-opacity=".35" fill="none"/></svg>
    <div class="wm-text"><span class="wm-big">3D世界网</span><span class="wm-small">WWW.3DSJW.COM</span></div>
  </div>

  <div class="dialog">
    <div class="d-title">
      <span class="d-icon">i</span>
      <span class="d-name">信息</span>
      <i class="d-min"></i><i class="d-max"></i><span class="d-close">✕</span>
    </div>
    <div class="d-client">
      <div class="d-menu"><span>文件(F)</span><span>编辑(E)</span></div>
      <div class="d-text"><span class="d-caret"></span>层1中的电极实体和基准点的数量不一致</div>
    </div>
  </div>
</div>
</body>
</html>
```

FILE: styles.css
```css
* { box-sizing: border-box; }
html, body { margin: 0; padding: 0; }
body { width: 1920px; height: 1080px; overflow: hidden; font-family: "Noto Sans CJK SC", "Liberation Sans", sans-serif; background: #ccc; }
.defs { position: absolute; }
.app { position: relative; width: 1920px; height: 1080px; display: flex; flex-direction: column; overflow: hidden; }

/* title bar */
.titlebar { height: 30px; display: flex; align-items: center; border-top: 3px solid #565656; padding-bottom: 3px; background: linear-gradient(90deg, #5e5e5e 0, #3a3a3a 200px, #1c1c1c 500px, #1a1a1a 100%); color: #eee; flex: none; }
.qat { width: 775px; display: flex; align-items: center; padding-left: 2px; flex: none; }
.q-logo { width: 22px; height: 24px; flex: none; }
.q-ic { width: 16px; height: 16px; flex: none; }
.q-sep { width: 1px; height: 22px; background: #6a6a6a; flex: none; }
.q-drop { color: #aaa; font-size: 9px; width: 8px; text-align: center; flex: none; }
.q-more { color: #aaa; font-size: 9px; border-top: 1px solid #aaa; line-height: 8px; flex: none; }
.q-text { font-size: 14px; color: #ccc; flex: none; }
.ml2 { margin-left: 2px; }
.ml3 { margin-left: 3px; }
.ml4 { margin-left: 4px; }
.ml5 { margin-left: 5px; }
.ml6 { margin-left: 6px; }
.ml7 { margin-left: 7px; }
.ml8 { margin-left: 8px; }
.title { margin: 0; font: 400 20px "Liberation Sans", "Noto Sans CJK SC", sans-serif; color: #ededed; white-space: nowrap; }
.siemens { margin-left: auto; margin-right: 26px; font: 700 17px "Liberation Sans", sans-serif; letter-spacing: .4px; color: #f4f4f4; }
.winbtns { display: flex; gap: 4px; margin-right: 3px; }
.wb { width: 25px; height: 22px; border: 1px solid #5a5a5a; border-radius: 3px; background: linear-gradient(#5a5a5a, #2d2d2d); color: #fff; padding: 0; display: flex; align-items: center; justify-content: center; font-size: 13px; }
.wb-close { background: linear-gradient(#e36a4e, #c33d28); border-color: #a33; font-weight: 700; }
.w-min { width: 8px; height: 3px; background: #fff; margin-top: 8px; }
.w-res { width: 9px; height: 9px; border: 1.500px solid #fff; box-shadow: 2px -2px 0 -0.5px #333, 3px -3px 0 -0.5px #fff; }

/* tabs */
.tabs { height: 32px; flex: none; display: flex; align-items: center; padding-right: 3px; background: linear-gradient(90deg, #1a1a1a 0, #1a1a1a 1560px, #262626 1620px, #1a1a1a 1700px); color: #f2f2f2; font-size: 15px; position: relative; }
.tab { width: 56px; text-align: center; flex: none; line-height: 32px; }
.tab-file { width: 88px; margin-right: 2px; background: linear-gradient(#2a66aa 0, #2a5f9f 70%, #4c98c8 100%); border-top-left-radius: 3px; border-top-right-radius: 3px; box-shadow: inset 0 1px 0 #4d7fb8; color: #f5f5f5; height: 32px; }
.tab-w { width: 74px; }
.tab-w2 { width: 112px; }
.tab-light { width: 144px; height: 30px; align-self: flex-end; background: #f3f4f5; color: #101080; font-size: 13px; border-radius: 3px 3px 0 0; text-align: center; line-height: 26px; flex: none; }
.search { margin-left: auto; width: 171px; height: 26px; border: 1px solid #555; background: #333; color: #999; font-size: 14px; display: flex; align-items: center; justify-content: space-between; padding: 0 6px 0 1px; }
.s-ic { width: 14px; height: 14px; }
.t-ic { flex: none; }
.t-fit { width: 16px; height: 16px; margin-left: 10px; }
.t-up { width: 14px; height: 14px; margin-left: 12px; }
.t-help { width: 15px; height: 18px; border-radius: 50%; background: radial-gradient(#6a90e8, #2a50c8); color: #fff; font: 700 13px/18px "Liberation Sans", sans-serif; text-align: center; margin: 0 5px 0 9px; flex: none; }
.sb { width: 18px; height: 18px; border-radius: 3px; background: linear-gradient(#fafafa, #c8c8c8); color: #555; font-size: 11px; line-height: 18px; text-align: center; margin-right: 2px; flex: none; display: flex; align-items: center; justify-content: center; font-weight: 700; }
.sb-r i { width: 9px; height: 9px; border: 1.500px solid #666; display: block; }

/* ribbon */
.ribbon { height: 106px; flex: none; display: flex; align-items: flex-start; background: linear-gradient(#e6e6e6, #cfcfcf 80%, #c4c4c4); border-bottom: 2px solid #a0a0a0; font-size: 15px; color: #111; padding-left: 5px; }
.toolgroup { width: 1436px; flex: none; padding-top: 5px; }
.toolbox { height: 77px; border: 1px solid #b4b4b4; border-right: 0; display: flex; justify-content: space-between; background: linear-gradient(#ececec, #e2e2e2); border-radius: 2px 0 0 2px; }
.toolgrid { display: grid; grid-template-columns: repeat(9, 43px); grid-auto-rows: 38px; margin-left: -1px; }
.toolgrid-r { display: grid; grid-template-columns: 30px 42px; grid-auto-rows: 38px; }
.ti { width: 26px; height: 26px; justify-self: center; align-self: center; }
.ti-clip { justify-self: start; }
.ti-drop { display: flex; align-items: center; justify-content: flex-end; gap: 6px; }
.ti-sm { width: 20px; height: 22px; }
.dr { font-size: 9px; color: #222; }
.svg-t { font: 700 8px "Liberation Sans", sans-serif; fill: #1a1a60; }
.svg-i { font: 700 10px "Liberation Serif", serif; fill: #111; }
.svg-a { font: 700 7px "Liberation Sans", sans-serif; fill: #222; }
.svg-wi { font: 700 15px "Liberation Serif", serif; fill: #fff; }
.group-label { text-align: center; font-size: 15px; color: #333; line-height: 20px; margin-top: 1px; width: 600px; }
.scrollcol { width: 20px; flex: none; padding-top: 5px; display: flex; flex-direction: column; position: relative; height: 104px; }
.sc { height: 25px; border: 1px solid #b4b4b4; background: #eee; font-size: 9px; text-align: center; line-height: 23px; color: #bbb; border-radius: 2px; }
.sc-d { color: #222; background: #e4e4e4; }
.sc-corner { font-size: 9px; color: #333; text-align: center; margin-top: 3px; margin-left: 2px; line-height: 12px; }
.rib-div { width: 1px; height: 92px; background: #f4f4f4; box-shadow: 1px 0 0 #c0c0c0; margin: 4px 8px 0 3px; flex: none; }
.rib-div.d2 { margin: 4px 0 0 8px; }
.bigbtn { display: flex; flex-direction: column; align-items: center; flex: none; padding-top: 8px; white-space: nowrap; line-height: 20px; gap: 8px; color: #111; }
.b1 { width: 90px; margin-right: 8px; }
.b2 { width: 60px; margin-right: 10px; }
.big-ic { width: 25px; height: 25px; }
.big-r { width: 28px; height: 28px; margin-top: -2px; margin-bottom: -1px; }
.cmdlist { list-style: none; margin: 1px 5px 0 0; padding: 0; width: 114px; flex: none; line-height: 26px; white-space: nowrap; }
.cmdlist li { height: 26px; display: flex; align-items: center; gap: 4px; }
.c2 { width: 114px; margin-right: 0; }
.ci { width: 15px; height: 15px; flex: none; margin-left: 0; }
.rib-arrow { font-size: 10px; color: #222; margin-left: 27px; margin-top: 83px; }

/* selection bar */
.selbar { height: 35px; flex: none; display: flex; align-items: center; background: linear-gradient(#d2d2d2, #dcdcdc 30%, #dcdcdc); padding-left: 10px; font-size: 15px; color: #222; }
.m-ic { width: 16px; height: 16px; flex: none; }
.m-txt { margin-left: 4px; white-space: nowrap; }
.m-dr { font-size: 9px; margin-left: 3px; }
.m-sep { width: 1px; height: 26px; background: #f0f0f0; margin: 0 12px 0 9px; }
.field { height: 25px; background: #fff; border: 1px solid #9aa; border-radius: 3px; display: flex; align-items: center; overflow: hidden; line-height: 22px; white-space: nowrap; padding-left: 1px; color: #111; font-size: 15px; justify-content: space-between; }
.f1 { width: 179px; margin-right: 10px; }
.f2 { width: 100px; }
.f-btn { width: 21px; height: 23px; background: linear-gradient(#cfe4f8, #6aa6e0); color: #123; font-size: 10px; text-align: center; font-weight: 400; line-height: 22px; }
.sel-arrow { margin-left: auto; margin-right: 5px; font-size: 10px; }

/* main */
.main { flex: 1; display: flex; min-height: 0; height: 829px; }
.rail { width: 31px; flex: none; background: linear-gradient(90deg, #b8b8b8, #b2b2b2 85%, #8e8e8e); display: flex; flex-direction: column; align-items: flex-end; padding-top: 5px; }
.gear { width: 17px; height: 17px; align-self: flex-start; margin: 3px 0 18px 7px; flex: none; }
.rtab { width: 26px; height: 40px; background: linear-gradient(#ececec, #d8d8d8); border: 1px solid #8e8e8e; border-right: 0; border-radius: 4px 0 0 4px; margin-bottom: 2px; display: flex; align-items: center; justify-content: center; flex: none; }
.rtab svg { width: 23px; height: 23px; }
.rtab.active { width: 28px; background: #f4f4f4; height: 43px; }
.gap1 { margin-top: 12px; }
.gap2 { margin-top: 12px; }
.gap3 { margin-top: 12px; }

.nav { width: 484px; flex: none; background: #e9e9e9; border-top: 2px solid #fafafa; padding: 0 10px 0 7px; display: flex; flex-direction: column; }
.nav-title { margin: 0; height: 35px; font: 700 15px/36px "Noto Sans CJK SC", sans-serif; color: #111; padding-left: 5px; flex: none; }
.tbl { height: 721px; flex: none; border: 2px solid #666; border-right-width: 1px; background: #fff; display: flex; flex-direction: column; overflow: hidden; }
.thead { display: flex; height: 24px; flex: none; background: linear-gradient(#e8e8e8, #e4e4e4 30%, #cfcfcf); border-bottom: 1px solid #888; font-size: 15px; color: #222; line-height: 23px; }
.th { border-right: 1px solid #fafafa; padding-left: 5px; white-space: nowrap; overflow: hidden; flex: none; position: relative; }
.th-name { width: 229px; padding-left: 5px; }
.th-a { width: 36px; }
.th-b { width: 24px; }
.th-c { width: 51px; padding-left: 5px; }
.th-d { flex: 1; border: 0; }
.sort { position: absolute; left: 114px; top: 8px; border-left: 5px solid transparent; border-right: 5px solid transparent; border-bottom: 7px solid #111; }
.tbody { height: 672px; flex: none; background-image: linear-gradient(#000, #000), linear-gradient(#e6e6e6, #e6e6e6), linear-gradient(#e6e6e6, #e6e6e6), linear-gradient(#e6e6e6, #e6e6e6), linear-gradient(#e6e6e6, #e6e6e6); background-size: 1px 100%; background-repeat: no-repeat; background-position: 229px 0, 265px 0, 289px 0, 313px 0, 363px 0; }
.row { height: 24px; position: relative; display: flex; align-items: center; border-bottom: 1px solid #e8e8e8; font-size: 13px; }
.row:nth-child(even) { background: rgba(170,170,170,.09); }
.folder { width: 16px; height: 14px; margin-left: 19px; flex: none; }
.cell-text { white-space: nowrap; font-family: "DejaVu Sans", "Noto Sans CJK SC", sans-serif; font-size: 13px; letter-spacing: .5px; }
.t-dark { color: #333; margin-left: 4px; }
.t-cjk { font-size: 14px; letter-spacing: 0; }
.t-gray { color: #a2a2a2; margin-left: 3px; }
.t-bold { color: #1a1a1a; font-weight: 700; margin-left: 3px; font-size: 12.5px; letter-spacing: .4px; }
.nm { margin-left: 4px; letter-spacing: 1.2px; }
.row::before { content: ""; position: absolute; }
.root::before { left: 9px; top: -10px; height: 12px; border-left: 1px dotted #888; }
.exp { width: 10px; height: 10px; border: 1px solid #999; margin-left: 4px; flex: none; position: relative; background: linear-gradient(90deg, transparent 2px, #888 2px, #888 7px, transparent 7px) center / 100% 1px no-repeat; border-radius: 2px; }
.chk { width: 13px; height: 13px; flex: none; }
.cube-ic { width: 14px; height: 14px; margin-left: 3px; flex: none; }
.root .chk { margin-left: 7px; }
.child .chk { margin-left: 40px; }
.child::before { left: 28px; top: -12px; height: 24px; width: 12px; border-left: 1px dotted #888; border-bottom: 1px dotted #888; }
.st { position: absolute; width: 14px; height: 14px; top: 4px; }
.st-a { left: 271px; }
.st-b { left: 295px; }
.qty { position: absolute; left: 319px; top: 3px; font: 14px "DejaVu Sans", sans-serif; color: #333; }
.dash { position: absolute; left: 272px; top: 5px; width: 12px; height: 12px; border: 1px dashed #222; }
.hscroll { flex: 1; display: flex; align-items: center; background: #f5f5f5; }
.hscroll .chev { width: 10px; height: 14px; margin: 0 6px; flex: none; }
.thumb { flex: 1; height: 19px; background: #cbcbcb; }
.splitter { height: 13px; display: flex; align-items: center; flex: none; gap: 3px; }
.splitter i { flex: 1; height: 1px; background: #fcfcfc; }
.splitter b { width: 87px; height: 6px; background: #c8c8c8; border: 1px solid #aaa; border-top-color: #eee; border-left-color: #eee; }
.acc { height: 26px; display: flex; align-items: center; background: linear-gradient(#f6f7f7 0, #f3f4f4 52%, #dddee0 55%, #d4d5d7 100%); border-bottom: 1px solid #8f8f8f; margin-left: 1px; flex: none; position: relative; }
.a2 { margin-top: 1px; }
.acc-t { color: #10105a; font-size: 15px; margin-left: 6px; }
.acc-c { width: 14px; height: 12px; margin-left: auto; margin-right: 6px; }
.acc::after { content: ""; position: absolute; right: 26px; top: 1px; bottom: 1px; width: 1px; background: #999; box-shadow: 1px 0 0 #fff; }

/* viewport */
.viewport { flex: 1; position: relative; border-top: 2px solid #f3a45a; border-left: 1px solid #f3a45a; background: linear-gradient(#b3b4b6 0, #c9cacc 35%, #dcdde0 65%, #e6e7e9 100%); }
.scene { position: absolute; left: 0; top: 0; width: 100%; height: 100%; }
.m { stroke: #3a2a2a; stroke-width: 1; vector-effect: non-scaling-stroke; }
.m0 { vector-effect: non-scaling-stroke; }
.ln { stroke: #3a2a2a; fill: none; stroke-width: 1; }
.mb { stroke: #5a7ae0; stroke-width: 1; fill: none; vector-effect: non-scaling-stroke; }
.ax { fill: none; }
.w-t { font: 400 30px "Liberation Sans", sans-serif; }
.wz { fill: #2a44e8; }
.wx { fill: #d86060; }
.wy { fill: #3cb04c; }
.tri { font: 400 10px "Liberation Sans", sans-serif; }
.tx { fill: #d05050; }
.ty { fill: #2ba02b; }
.tz { fill: #4a6ae0; }

/* taskbar */
.taskbar { height: 48px; flex: none; display: flex; align-items: center; border-top: 1px solid #6b5a30; background: linear-gradient(90deg, #c08d35 0, #bb882c 600px, #b57a2c 800px, #ae722c 940px, #a0843f 941px, #9c7f3e 1061px, #c0aa78 1062px, #b9a272 1700px, #c99d50 1730px, #cb9a48 100%); }
.t-win { width: 34px; height: 33px; margin-left: 13px; flex: none; }
.t-app { flex: none; }
.t-ie1 { width: 38px; height: 38px; margin-left: 31px; }
.tbtn { height: 46px; background: rgba(255,255,255,.18); border: 1px solid rgba(255,255,255,.35); display: flex; align-items: center; justify-content: center; flex: none; }
.tbtn svg { width: 38px; height: 38px; }
.t-exp { width: 70px; margin-left: 19px; }
.t-tool { width: 40px; height: 40px; margin-left: 18px; }
.t-nx { width: 65px; margin-left: 18px; }
.sliver { width: 4px; height: 46px; background: rgba(255,255,255,.18); border: 1px solid rgba(255,255,255,.3); margin-left: 1px; flex: none; }
.s1 { margin-right: 3px; }
.t-ie2 { width: 62px; }
.t-paint { width: 70px; margin-left: 1px; }
.tray { margin-left: auto; display: flex; align-items: center; color: #fff; height: 100%; }
.tr-up { width: 0; height: 0; border-left: 5px solid transparent; border-right: 5px solid transparent; border-bottom: 5px solid #eee; margin-right: 17px; }
.tr-bt { width: 15px; height: 20px; margin-right: 13px; }
.tr-ic { width: 20px; height: 20px; margin-right: 10px; flex: none; }
.tr-lang { font-size: 15px; margin: 0 13px 0 7px; white-space: nowrap; }
.clock { display: flex; flex-direction: column; align-items: center; width: 80px; margin-right: 15px; margin-top: -2px; font: 15px/22px "Open Sans", "Liberation Sans", sans-serif; color: #f6f6f6; }

/* ime */
.imebar { position: absolute; left: 1533px; top: 1006px; width: 158px; height: 26px; border: 1px solid #fff; background: #e0e0e0; display: flex; align-items: center; padding: 1px 2px; outline: 1px solid #bbb; outline-offset: -2px; }
.ime-seal { width: 17px; height: 18px; background: #dd1e1e; color: #fff; font-size: 13px; line-height: 18px; text-align: center; margin: 0 2px; flex: none; }
.ime-main { width: 71px; height: 20px; border: 1px solid #999; border-right: 1px solid #222; text-align: center; font-size: 15px; line-height: 18px; color: #111; flex: none; }
.ime-k { width: 20px; font-size: 11px; text-align: center; color: #222; border-right: 1px solid #555; height: 20px; flex: none; }
.ime-kb { width: 20px; height: 18px; margin-left: 1px; }

/* watermark */
.watermark { position: absolute; left: 1637px; top: 985px; display: flex; gap: 11px; pointer-events: none; }
.wm-logo { width: 72px; height: 86px; flex: none; }
.wm-text { display: flex; flex-direction: column; margin-top: 6px; }
.wm-big { font: 700 41px/48px "Noto Sans CJK SC", sans-serif; color: rgba(255,255,255,.4); white-space: nowrap; }
.wm-small { font: 700 17px/20px "Liberation Sans", sans-serif; letter-spacing: 2px; color: rgba(255,255,255,.25); white-space: nowrap; }

/* dialog */
.dialog { position: absolute; left: 391px; top: 42px; width: 992px; height: 443px; background: #eec566; border: 1px solid #c9a855; padding: 0 7px 8px 8px; display: flex; flex-direction: column; }
.d-title { height: 37px; flex: none; display: flex; align-items: flex-start; position: relative; }
.d-icon { width: 20px; height: 20px; background: #fff; color: #1212e6; font: italic 700 19px/20px "Liberation Serif", serif; text-align: center; margin: 8px 0 0 2px; }
.d-name { position: absolute; left: 0; right: 0; text-align: center; top: 6px; font-size: 17px; line-height: 24px; color: #333; }
.d-min { position: absolute; right: 104px; top: 18px; width: 11px; height: 2px; background: #222; }
.d-max { position: absolute; right: 68px; top: 7px; width: 15px; height: 12px; border: 1px solid #222; border-top-width: 3px; }
.d-close { position: absolute; right: 0; top: 0; width: 58px; height: 26px; background: #c75050; color: #fff; text-align: center; font-size: 15px; line-height: 26px; font-weight: 700; }
.d-client { flex: 1; display: flex; flex-direction: column; background: #fff; border: 1px solid #dcb55a; min-height: 0; }
.d-menu { height: 24px; flex: none; background: #f3f4f6; display: flex; gap: 14px; padding-left: 6px; font-size: 15px; line-height: 24px; color: #222; }
.d-text { flex: 1; border: 1px solid #999; box-shadow: inset 0 0 0 1px #fff, inset 0 0 0 2px #bbb; padding: 3px 4px; font-size: 15px; letter-spacing: 3px; line-height: 22px; color: #222; position: relative; }
.d-caret { display: inline-block; width: 1px; height: 19px; background: #000; vertical-align: -4px; margin-right: -3px; }
```
